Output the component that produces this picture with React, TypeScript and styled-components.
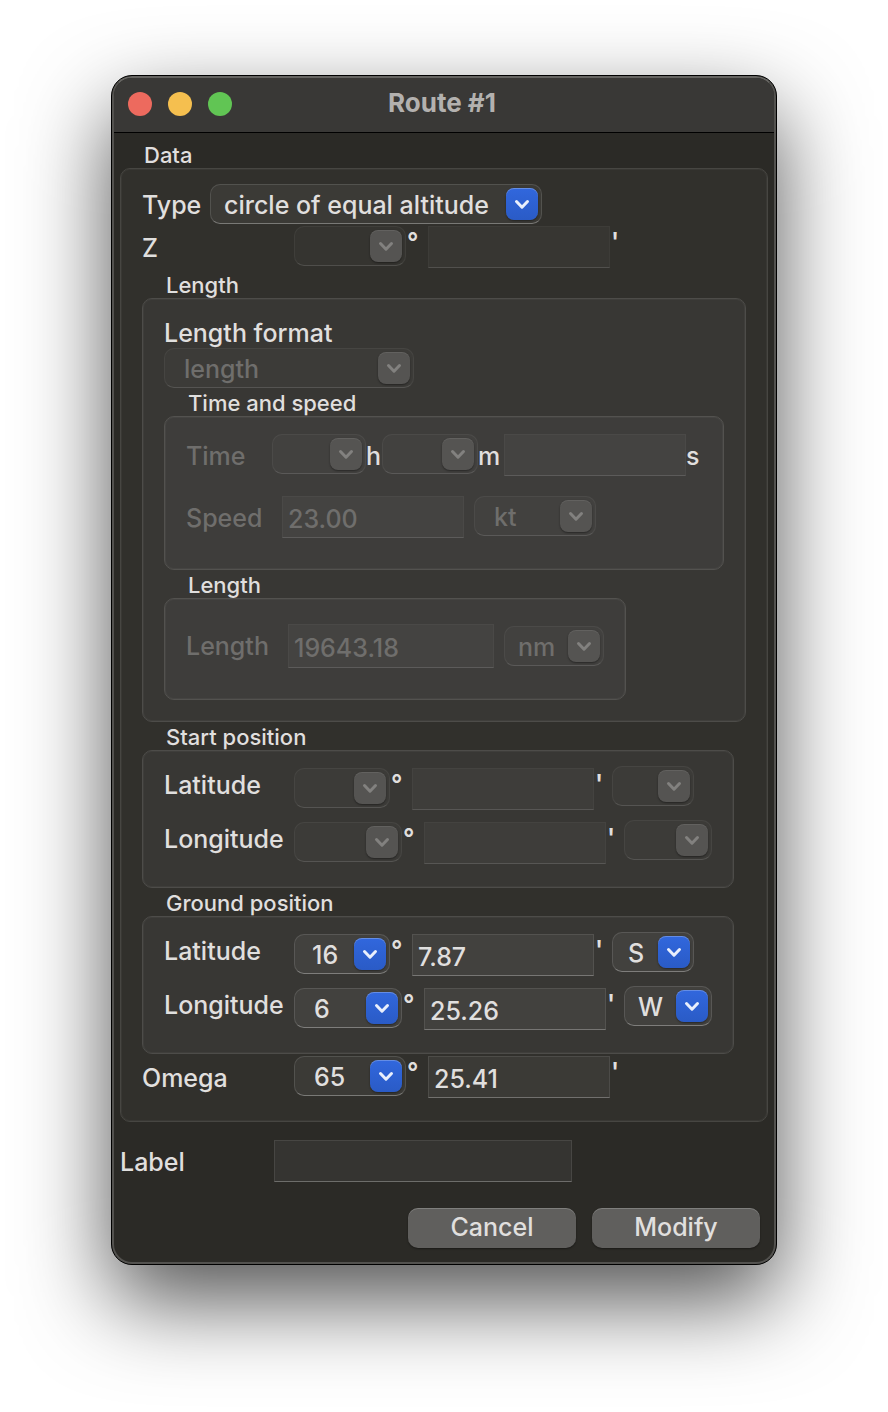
import React, { useId } from "react";
import styled, { createGlobalStyle, css } from "styled-components";

const GlobalStyle = createGlobalStyle`
  *, *::before, *::after { box-sizing: border-box; }
  body {
    margin: 0;
    background: #fff;
    font-family: Inter, "Liberation Sans", sans-serif;
    -webkit-font-smoothing: antialiased;
  }
`;

const text = css`
  font-family: Inter, "Liberation Sans", sans-serif;
  font-size: 25px;
  font-weight: 500;
  color: #e0dfde;
`;

const Desktop = styled.main`
  padding: 75px 111px 147px;
`;

const Window = styled.section`
  min-width: 666px;
  overflow: hidden;
  border: 1px solid #000;
  border-radius: 21px;
  background: #2b2a26;
  box-shadow: 0 36px 88px rgba(0, 0, 0, 0.68);
`;

const Frame = styled.div`
  border: 2px solid #53524f;
  border-top-color: #656461;
  border-radius: 20px;
  overflow: hidden;
`;

const TitleBar = styled.header`
  display: grid;
  grid-template-columns: 1fr auto 1fr;
  align-items: center;
  height: 55px;
  padding: 0 18px 2px 14px;
  border-bottom: 1px solid #000;
  background: #393836;
`;

const Title = styled.h1`
  margin: 0;
  font-size: 26px;
  line-height: 28px;
  padding-bottom: 2px;
  font-weight: 700;
  color: #b3b1af;
`;

const Lights = styled.div`
  display: flex;
  gap: 16px;
`;

const Light = styled.button<{ $color: string }>`
  width: 24px;
  height: 24px;
  padding: 0;
  border: 0;
  border-radius: 50%;
  background: ${(p) => p.$color};
`;

const Form = styled.form`
  padding: 7px 6px 14px;
`;

const Group = styled.fieldset`
  min-width: 0;
  margin: 0;
  padding: 0;
  border: 0;
`;

const Legend = styled.legend`
  display: block;
  padding: 2px 24px 0;
  font-size: 22px;
  font-weight: 500;
  line-height: 26px;
  color: #e0dfde;
`;

const Panel = styled.div<{ $level: 1 | 2 | 3; $fit?: boolean; $pad: string }>`
  width: ${(p) => (p.$fit ? "fit-content" : "auto")};
  padding: ${(p) => p.$pad};
  border: 1px solid ${(p) => ["#474642", "#4d4c49", "#53524f"][p.$level - 1]};
  border-radius: 10px;
  background: ${(p) => ["#31302c", "#383734", "#3e3d3b"][p.$level - 1]};
  box-shadow: inset 0 0 0 1px rgba(255, 255, 255, 0.04);
`;

const Row = styled.div<{ $after?: number; $center?: boolean }>`
  display: flex;
  align-items: ${(p) => (p.$center ? "center" : "flex-start")};
  margin-bottom: ${(p) => p.$after ?? 0}px;
`;

const Label = styled.label<{ $w?: number; $h?: number; $dim?: boolean }>`
  ${text}
  flex: none;
  width: ${(p) => (p.$w ? `${p.$w}px` : "auto")};
  line-height: ${(p) => p.$h ?? 44}px;
  white-space: nowrap;
  ${(p) => p.$dim && "color: #6f6e6c;"}
`;

const FormatLabel = styled(Label)`
  display: block;
`;

const Unit = styled.span<{ $w?: number }>`
  ${text}
  flex: none;
  width: ${(p) => (p.$w ? `${p.$w}px` : "auto")};
  line-height: 44px;
`;

const Mark = styled.span<{ $w: number }>`
  ${text}
  flex: none;
  width: ${(p) => p.$w}px;
  padding-left: 1px;
  font-weight: 600;
  line-height: 32px;
`;

const Field = styled.input<{ $w: number; $tall?: boolean }>`
  ${text}
  flex: none;
  width: ${(p) => p.$w}px;
  height: ${(p) => (p.$tall ? 44 : 42)}px;
  padding: 3px 5px 0;
  border: 1px solid rgba(255, 255, 255, 0.09);
  border-bottom-color: rgba(255, 255, 255, 0.28);
  border-radius: 0;
  outline: 0;
  background: rgba(255, 255, 255, 0.05);
  &:disabled {
    color: #6f6e6c;
    background: rgba(255, 255, 255, 0.03);
    border-color: rgba(255, 255, 255, 0.03);
    border-bottom-color: rgba(255, 255, 255, 0.13);
  }
`;

const SelectBox = styled.span<{ $w: number; $gap?: number }>`
  position: relative;
  flex: none;
  display: block;
  width: ${(p) => p.$w}px;
  height: 40px;
  margin-left: ${(p) => p.$gap ?? 0}px;
`;

const SelectControl = styled.select<{ $inset: number }>`
  ${text}
  display: block;
  width: 100%;
  height: 40px;
  padding: 2px 36px 0 ${(p) => p.$inset}px;
  appearance: none;
  border: 1px solid rgba(255, 255, 255, 0.12);
  border-bottom-color: rgba(255, 255, 255, 0.32);
  border-radius: 10px;
  outline: 0;
  background: rgba(255, 255, 255, 0.05);
  &:disabled {
    opacity: 1;
    color: #6f6e6c;
    background: rgba(255, 255, 255, 0.025);
    border-color: rgba(255, 255, 255, 0.05);
    border-bottom-color: rgba(255, 255, 255, 0.13);
  }
`;

const Arrow = styled.span<{ $off?: boolean }>`
  position: absolute;
  top: 4px;
  right: 4px;
  width: 32px;
  height: 32px;
  border-radius: 8px;
  pointer-events: none;
  color: ${(p) => (p.$off ? "#82817f" : "#e9effc")};
  background: ${(p) => (p.$off ? "#555452" : "linear-gradient(#3167dd, #2a5bc6)")};
  box-shadow: 0 1px 2px rgba(0, 0, 0, 0.4),
    inset 0 1px 0 rgba(255, 255, 255, ${(p) => (p.$off ? 0.08 : 0.25)});
  svg { display: block; }
`;

const CoordinateCell = styled.div`
  padding-top: 2px;
`;

const OmegaRow = styled(Row)`
  padding-top: 2px;
`;

const LabelRow = styled(Row)`
  padding-top: 18px;
`;

const Buttons = styled.div`
  display: flex;
  justify-content: flex-end;
  gap: 16px;
  padding: 24px 8px 0 0;
`;

const PushButton = styled.button`
  ${text}
  width: 168px;
  height: 40px;
  padding: 0 0 2px;
  border: 0;
  border-radius: 10px;
  background: #605f5d;
  box-shadow: inset 0 1px 0 rgba(255, 255, 255, 0.2), 0 1px 2px rgba(0, 0, 0, 0.4);
`;

type SelectProps = {
  id?: string;
  name?: string;
  value?: string;
  w: number;
  inset?: number;
  gap?: number;
  off?: boolean;
};

function Select({ id, name, value = "", w, inset = 14, gap, off }: SelectProps) {
  return (
    <SelectBox $w={w} $gap={gap}>
      <SelectControl id={id} aria-label={name} $inset={inset - 1} disabled={off} defaultValue={value}>
        <option value={value}>{value}</option>
      </SelectControl>
      <Arrow $off={off}>
        <svg width="32" height="32" viewBox="0 0 32 32" fill="none" aria-hidden="true">
          <path
            d="M10.5 13.5 16 19.2 21.5 13.5"
            stroke="currentColor"
            strokeWidth="3"
            strokeLinecap="round"
            strokeLinejoin="round"
          />
        </svg>
      </Arrow>
    </SelectBox>
  );
}

type AngleProps = {
  id: string;
  name: string;
  w: number;
  inset?: number;
  degrees?: string;
  minutes?: string;
  off?: boolean;
};

function Angle({ id, name, w, inset = 20, degrees, minutes = "", off }: AngleProps) {
  return (
    <Row>
      <Select id={id} w={w} inset={inset} value={degrees} off={off} />
      <Mark $w={22}>°</Mark>
      <Field aria-label={`${name} minutes`} $w={182} defaultValue={minutes} disabled={off} />
      <Mark $w={18}>'</Mark>
    </Row>
  );
}

type Coordinate = { degrees?: string; minutes?: string; side?: string };

type PositionProps = { title: string; lat: Coordinate; lng: Coordinate; off?: boolean };

function Position({ title, lat, lng, off }: PositionProps) {
  const id = useId();
  return (
    <Group>
      <Legend>{title}</Legend>
      <Panel $level={2} $fit $pad="15px 21px 23px">
        <Row $after={10}>
          <Label htmlFor={`${id}-lat`} $w={130} $h={38}>Latitude</Label>
          <CoordinateCell>
            <Angle
              id={`${id}-lat`}
              name="Latitude"
              w={96}
              inset={18}
              degrees={lat.degrees}
              minutes={lat.minutes}
              off={off}
            />
          </CoordinateCell>
          <Select name="North or south" w={82} inset={16} value={lat.side} off={off} />
        </Row>
        <Row>
          <Label htmlFor={`${id}-lng`} $w={130} $h={38}>Longitude</Label>
          <CoordinateCell>
            <Angle
              id={`${id}-lng`}
              name="Longitude"
              w={108}
              degrees={lng.degrees}
              minutes={lng.minutes}
              off={off}
            />
          </CoordinateCell>
          <Select name="East or west" w={88} value={lng.side} off={off} />
        </Row>
      </Panel>
    </Group>
  );
}

export default function App() {
  return (
    <>
      <GlobalStyle />
      <Desktop>
        <Window>
          <Frame>
            <TitleBar>
              <Lights>
                <Light type="button" aria-label="Close" $color="#ed6a5e" />
                <Light type="button" aria-label="Minimize" $color="#f5bf4f" />
                <Light type="button" aria-label="Zoom" $color="#61c554" />
              </Lights>
              <Title>Route #1</Title>
            </TitleBar>
            <Form onSubmit={(e) => e.preventDefault()}>
              <Group>
                <Legend>Data</Legend>
                <Panel $level={1} $pad="15px 21px 21px">
                  <Row>
                    <Label htmlFor="type" $w={68} $h={42}>Type</Label>
                    <Select id="type" w={332} value="circle of equal altitude" />
                  </Row>
                  <Row>
                    <Label htmlFor="z" $w={152}>Z</Label>
                    <Angle id="z" name="Z" w={112} off />
                  </Row>
                  <Group>
                    <Legend>Length</Legend>
                    <Panel $level={2} $pad="19px 21px 21px">
                      <FormatLabel htmlFor="format" $h={30}>Length format</FormatLabel>
                      <Select id="format" w={250} inset={20} value="length" off />
                      <Group>
                        <Legend>Time and speed</Legend>
                        <Panel $level={3} $pad="17px 21px 29px">
                          <Row $after={18}>
                            <Label htmlFor="hours" $w={86} $dim>Time</Label>
                            <Select id="hours" w={94} off />
                            <Unit $w={16}>h</Unit>
                            <Select name="Minutes" w={96} off />
                            <Unit $w={26}>m</Unit>
                            <Field aria-label="Seconds" $w={182} disabled />
                            <Unit>s</Unit>
                          </Row>
                          <Row>
                            <Label htmlFor="speed" $w={96} $dim>Speed</Label>
                            <Field id="speed" $w={182} defaultValue="23.00" disabled />
                            <Select name="Speed unit" w={122} inset={20} gap={10} value="kt" off />
                          </Row>
                        </Panel>
                      </Group>
                      <Group>
                        <Legend>Length</Legend>
                        <Panel $level={3} $fit $pad="25px 21px 31px">
                          <Row $center>
                            <Label htmlFor="length" $w={102} $dim>Length</Label>
                            <Field id="length" $w={206} $tall defaultValue="19643.18" disabled />
                            <Select name="Length unit" w={100} gap={10} value="nm" off />
                          </Row>
                        </Panel>
                      </Group>
                    </Panel>
                  </Group>
                  <Position title="Start position" lat={{}} lng={{}} off />
                  <Position
                    title="Ground position"
                    lat={{ degrees: "16", minutes: "7.87", side: "S" }}
                    lng={{ degrees: "6", minutes: "25.26", side: "W" }}
                  />
                  <OmegaRow>
                    <Label htmlFor="omega" $w={152}>Omega</Label>
                    <Angle id="omega" name="Omega" w={112} degrees="65" minutes="25.41" />
                  </OmegaRow>
                </Panel>
              </Group>
              <LabelRow>
                <Label htmlFor="label" $w={154}>Label</Label>
                <Field id="label" $w={298} />
              </LabelRow>
              <Buttons>
                <PushButton type="button">Cancel</PushButton>
                <PushButton type="submit">Modify</PushButton>
              </Buttons>
            </Form>
          </Frame>
        </Window>
      </Desktop>
    </>
  );
}
